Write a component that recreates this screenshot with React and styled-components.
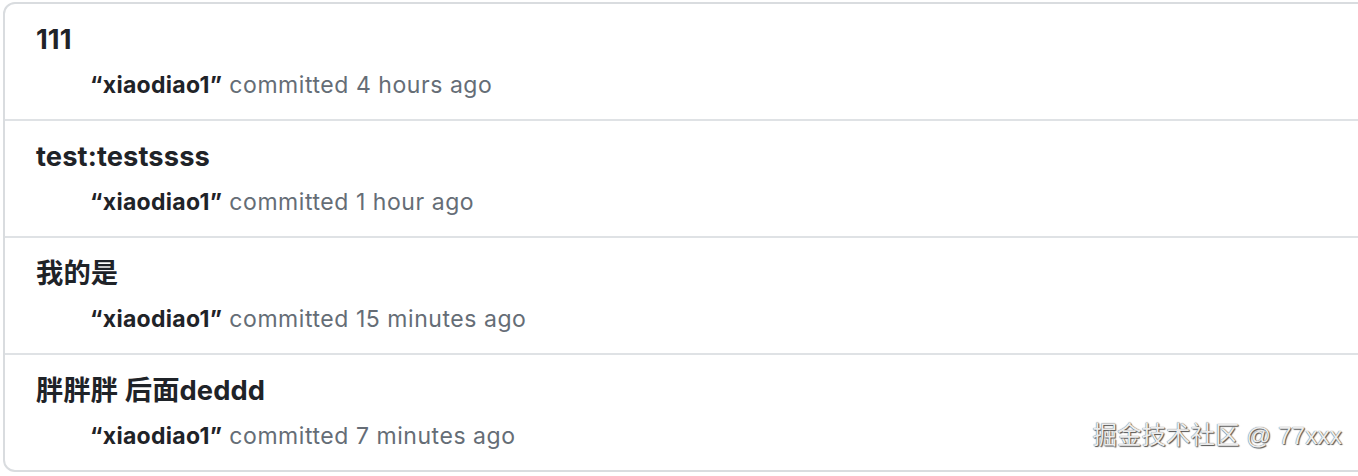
import React from "react";
import styled, { createGlobalStyle } from "styled-components";

const commits = [
  { title: "111", author: "xiaodiao1", when: "4 hours ago" },
  { title: "test:testssss", author: "xiaodiao1", when: "1 hour ago" },
  { title: "我的是", author: "xiaodiao1", when: "15 minutes ago" },
  { title: "胖胖胖 后面deddd", author: "xiaodiao1", when: "7 minutes ago" },
];

function App() {
  return (
    <>
      <GlobalStyle />
      <Page>
        <List>
          {commits.map((c, i) => (
            <Row key={i}>
              <Title>{c.title}</Title>
              <Meta>
                <Author>“{c.author}”</Author> committed {c.when}
              </Meta>
            </Row>
          ))}
        </List>
        <Watermark>掘金技术社区 @ 77xxx</Watermark>
      </Page>
    </>
  );
}

export default App;

const GlobalStyle = createGlobalStyle`
  html, body {
    margin: 0;
    padding: 0;
    background: #ffffff;
    overflow: hidden;
  }
  body {
    font-family: Inter, "Noto Sans CJK SC", sans-serif;
  }
`;

const Page = styled.div`
  position: relative;
  width: 1358px;
  height: 476px;
  padding: 2px 0 0 3px;
  box-sizing: border-box;
`;

const List = styled.div`
  width: 1400px;
  border: 2px solid #d9dcdf;
  border-radius: 12px;
  background: #ffffff;
`;

const Row = styled.div`
  padding: 20px 0 18px 31px;
  height: 115px;
  box-sizing: border-box;

  & + & {
    border-top: 2px solid #dfe2e5;
    height: 117px;
  }
`;

const Title = styled.div`
  font-size: 27.3px;
  line-height: 32px;
  font-weight: 700;
  letter-spacing: 0.1px;
  color: #1f2328;
`;

const Meta = styled.div`
  margin-top: 14px;
  padding-left: 54px;
  font-size: 23px;
  line-height: 30px;
  letter-spacing: 0.55px;
  color: #656d76;
`;

const Author = styled.span`
  font-weight: 700;
  letter-spacing: 0.3px;
  color: #1f2328;
`;

const Watermark = styled.div`
  position: absolute;
  right: 16px;
  top: 421px;
  font-size: 24.5px;
  line-height: 30px;
  font-family: "Liberation Sans", "Noto Sans CJK SC", sans-serif;
  color: #ececec;
  text-shadow: 0 0 1px #444, 1px 1px 1px #555;
`;
